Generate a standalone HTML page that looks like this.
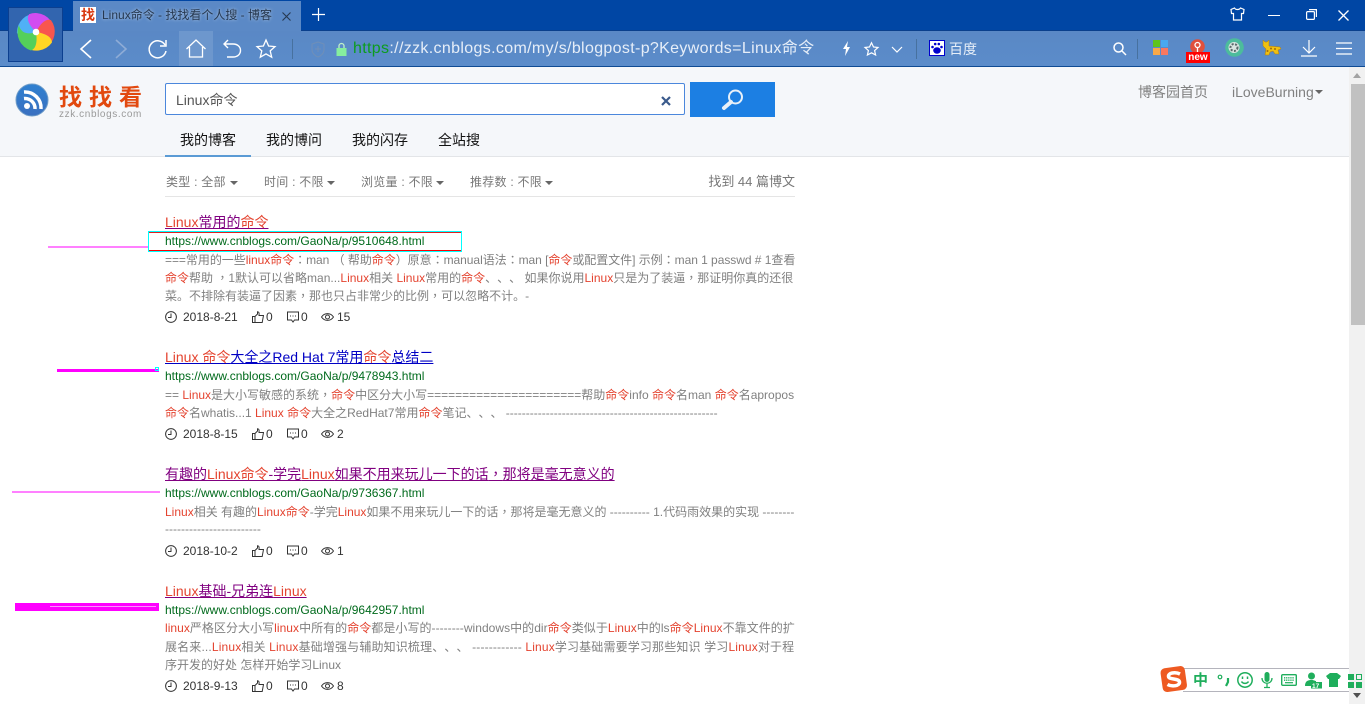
<!DOCTYPE html>
<html lang="zh-CN"><head><meta charset="utf-8"><title>Linux命令 - 找找看个人搜 - 博客园</title>
<style>
html,body{margin:0;padding:0;width:1365px;height:704px;overflow:hidden;background:#fff;font-family:"Liberation Sans","Noto Sans CJK SC",sans-serif;text-spacing-trim:space-all}
.a{position:absolute;white-space:nowrap}
svg{position:absolute;overflow:visible}
.t{left:165px;font-size:14px;line-height:20px;height:20px;text-decoration:underline}
.t i,.s i{font-style:normal;color:#e4432f}
.c{font-family:"Liberation Sans","Noto Sans CJK TC",sans-serif}
.p{color:#800080}.b{color:#0000c4}
.u{left:165px;font-size:12px;line-height:16px;color:#006a1c}
.s{left:165px;font-size:12px;line-height:18px;color:#808080}
.m{font-size:12px;line-height:16px;color:#333}
.f{font-size:12px;line-height:16px;color:#777;top:174px;letter-spacing:.25px}
.n{font-size:14px;line-height:20px;color:#111;top:130px}
.car{position:absolute;width:0;height:0;border:4px solid transparent;border-top:4px solid #666;border-bottom:0}
</style></head>
<body>
<svg width="0" height="0" style="position:absolute"><defs>
<symbol id="clock" viewBox="0 0 12 12"><circle cx="6" cy="6" r="5.4" fill="none" stroke="#333"/><path d="M6 2.500V6.500H3" fill="none" stroke="#333"/></symbol>
<symbol id="thumb" viewBox="0 0 12 12"><path d="M.5 5.500H3V11.500H.5ZM3 5.500 5.500 3V.7C7 .7 7.300 2 7 4.500H11.500L10.200 11.500H3" fill="none" stroke="#333"/></symbol>
<symbol id="cmt" viewBox="0 0 12 12"><path d="M.5 1H11.500V9H7.500L6 11 4.500 9H.5Z" fill="none" stroke="#333"/><path d="M3 5H4M5.500 5H6.500M8 5H9" stroke="#333"/></symbol>
<symbol id="eye" viewBox="0 0 13 10"><path d="M.5 5C3.500.5 9.500.5 12.500 5 9.500 9.500 3.500 9.500.5 5Z" fill="none" stroke="#333"/><circle cx="6.500" cy="5" r="2" fill="none" stroke="#333"/></symbol>
<path id="petal" d="M0 0C-6-6-9-12-6-16A17 17 0 0 1 16-4C10-9 4-6 0 0Z"/>
</defs></svg>

<!-- title bar -->
<div class="a" style="left:0;top:0;width:1365px;height:31px;background:#0046a4"></div>
<div class="a" style="left:0;top:30px;width:1365px;height:1px;background:#0a3f8c"></div>
<div class="a" style="left:0;top:31px;width:1365px;height:35px;background:linear-gradient(#5a88c5,#5b8cca)"></div>
<div class="a" style="left:0;top:66px;width:1365px;height:1px;background:#0f4b94"></div>
<div class="a" style="left:73px;top:1px;width:228px;height:30px;background:#5b89c6"></div>
<div class="a" style="left:80px;top:7px;width:16px;height:16px;background:#fff;color:#d8380f;font:bold 14px/16px 'Noto Sans CJK SC',sans-serif;text-align:center">找</div>
<div class="a" style="left:102px;top:7px;font-size:12px;line-height:17px;color:#26384f;text-shadow:0 0 3px #b9cde6">Linux命令 - 找找看个人搜 - 博客</div>
<svg style="left:282px;top:12px" width="9" height="9"><path d="M.5.500 8.500 8.500M8.500.500.5 8.500" stroke="#26384f" stroke-width="1.100"/></svg>
<svg style="left:312px;top:8px" width="13" height="13"><path d="M6.500 0V13M0 6.500H13" stroke="#fff" stroke-width="1.200"/></svg>
<!-- app logo -->
<div class="a" style="left:8px;top:7px;width:53px;height:53px;background:#3265af;border:1px solid #0c3f8f"></div>
<svg style="left:35.700px;top:32.300px" width="1" height="1"><g transform="scale(1.120)">
<use href="#petal" fill="#50b0f6" transform="rotate(288)"/>
<use href="#petal" fill="#d24cf0"/>
<use href="#petal" fill="#f8564e" transform="rotate(72)"/>
<use href="#petal" fill="#ffd624" transform="rotate(144)"/>
<use href="#petal" fill="#54d05a" transform="rotate(216)"/>
<path d="M0 0C-6-6-9-12-6-16L0-8Z" fill="#d24cf0"/>
</g><circle r="3.300" fill="#fff"/></svg>
<!-- nav icons -->
<svg style="left:78px;top:38px" width="16" height="22" fill="none" stroke="#fff" stroke-width="1.600"><path d="M13 2 3 11 13 20"/></svg>
<svg style="left:113px;top:38px" width="16" height="22" fill="none" stroke="#8eacd6" stroke-width="1.600"><path d="M3 2 13 11 3 20"/></svg>
<svg style="left:148px;top:39px" width="20" height="20" fill="none" stroke="#fff" stroke-width="1.500"><path d="M17 6A8.500 8.500 0 1 0 18 12"/><path d="M18 1V7H12"/></svg>
<div class="a" style="left:179px;top:31px;width:34px;height:35px;background:#6d97cd"></div>
<svg style="left:186px;top:39px" width="20" height="19" fill="none" stroke="#fff" stroke-width="1.300"><path d="M.5 10 10 1 19.500 10M3.500 8V18H16.500V8"/></svg>
<svg style="left:223px;top:39px" width="18" height="19" fill="none" stroke="#fff" stroke-width="1.400"><path d="M5 1 1 5 5 9M1 5H10C20 5 20 18 10 18H4"/></svg>
<svg style="left:256px;top:39px" width="20" height="19" fill="none" stroke="#fff" stroke-width="1.300"><path d="M10 1 12.600 7 19 7.600 14.200 11.900 15.700 18.200 10 14.900 4.300 18.200 5.800 11.900 1 7.600 7.400 7Z"/></svg>
<div class="a" style="left:292px;top:39px;width:1px;height:20px;background:#47719f"></div>
<svg style="left:311px;top:41px" width="14" height="17" fill="none" stroke="#6f8fb8"><path d="M7 1 13 3V9C13 12 10 15 7 16 4 15 1 12 1 9V3ZM7 5V11M4 8H10"/></svg>
<svg style="left:336px;top:42px" width="11" height="14"><path d="M3 6V4A2.500 2.500 0 0 1 8 4V6" fill="none" stroke="#bff0c8" stroke-width="1.300"/><rect x="0.500" y="6" width="10" height="8" fill="#86ee9e"/></svg>
<div class="a" style="left:353px;top:39px;font-size:16px;line-height:20px;color:#e6eef8;letter-spacing:.34px"><span style="color:#0c9c1e">https</span>://zzk.cnblogs.com/my/s/blogpost-p?Keywords=Linux命令</div>
<svg style="left:842px;top:41px" width="9" height="15"><path d="M6 0 1 8H4L3 15 8 6H5Z" fill="#fff"/></svg>
<svg style="left:864px;top:42px" width="15" height="14" fill="none" stroke="#fff" stroke-width="1.200"><path d="M7.500.800 9.500 5 14 5.500 10.600 8.600 11.600 13 7.500 10.800 3.400 13 4.400 8.600 1 5.500 5.500 5Z"/></svg>
<svg style="left:891px;top:46px" width="12" height="8" fill="none" stroke="#fff" stroke-width="1.200"><path d="M1 1 6 6 11 1"/></svg>
<div class="a" style="left:916px;top:39px;width:1px;height:20px;background:#47719f"></div>
<div class="a" style="left:929px;top:40px;width:14px;height:14px;background:#fff;border:1px solid #00c"></div>
<svg style="left:931px;top:42px" width="12" height="12" fill="#00c"><ellipse cx="6" cy="8.500" rx="3.800" ry="3.200"/><circle cx="1.500" cy="5" r="1.300"/><circle cx="4.200" cy="2" r="1.300"/><circle cx="7.800" cy="2" r="1.300"/><circle cx="10.500" cy="5" r="1.300"/></svg>
<div class="a" style="left:949px;top:39px;font-size:14px;line-height:20px;color:#e6eef8">百度</div>
<svg style="left:1113px;top:42px" width="14" height="14" fill="none" stroke="#fff" stroke-width="1.500"><circle cx="5.500" cy="5.500" r="4.500"/><path d="M9 9 13 13"/></svg>
<div class="a" style="left:1137px;top:39px;width:1px;height:20px;background:#47719f"></div>
<div class="a" style="left:1153px;top:40px;width:7px;height:7px;background:#5fc41c"></div>
<div class="a" style="left:1161px;top:40px;width:7px;height:7px;background:#48a8f0"></div>
<div class="a" style="left:1153px;top:48px;width:7px;height:7px;background:#f8a848"></div>
<div class="a" style="left:1161px;top:48px;width:7px;height:7px;background:#f87860"></div>
<svg style="left:1190px;top:39px" width="15" height="15"><circle cx="7.500" cy="7.500" r="7.300" fill="#e0503c"/><circle cx="7.500" cy="6" r="2.500" fill="none" stroke="#fff" stroke-width="1.300"/><path d="M7.500 8.500V13" stroke="#fff" stroke-width="1.300"/></svg>
<div class="a" style="left:1186px;top:52px;width:24px;height:11px;background:#f00;color:#fff;font:bold 10px/11px 'Liberation Sans',sans-serif;text-align:center">new</div>
<svg style="left:1225px;top:38px" width="19" height="19"><circle cx="9.500" cy="9.500" r="9.300" fill="#4cbc9c"/><circle cx="9" cy="9.500" r="5.500" fill="#d8e4e0"/><circle cx="9" cy="9.500" r="3.500" fill="none" stroke="#58686a" stroke-width="2" stroke-dasharray="2 1.500"/></svg>
<svg style="left:1262px;top:40px" width="19" height="15"><path d="M1 0 3 2H5L7 0V6L18 7 19 9 16 10 17 14H13L11 11 8 12 7 15H3L4 9 1 6Z" fill="#f0c010" stroke="#b07a10" stroke-width=".5"/><circle cx="9" cy="8.500" r="1" fill="#a06a10"/><circle cx="13" cy="9" r="1" fill="#a06a10"/><circle cx="5.500" cy="11" r="1" fill="#a06a10"/></svg>
<svg style="left:1301px;top:40px" width="16" height="17" fill="none" stroke="#fff" stroke-width="1.200"><path d="M8 0V12M2 7 8 13 14 7M0 16H16"/></svg>
<svg style="left:1336px;top:42px" width="16" height="13" stroke="#fff" stroke-width="1.200"><path d="M0 1H16M0 6.500H16M0 12H16"/></svg>

<!-- page header -->
<div class="a" style="left:0;top:67px;width:1349px;height:89px;background:#f5f7fa"></div>
<div class="a" style="left:0;top:156px;width:1349px;height:1px;background:#e3e5e8"></div>
<svg style="left:15px;top:83px" width="34" height="34"><defs><linearGradient id="rg" x1="0" y1="0" x2="0" y2="1"><stop offset="0" stop-color="#2f80d0"/><stop offset="1" stop-color="#3a70c0"/></linearGradient></defs><circle cx="17" cy="17" r="16" fill="url(#rg)" stroke="#6e9cc8"/><circle cx="12" cy="23" r="3" fill="#fff"/><path d="M9 15.500A10 10 0 0 1 20 26M9 9A16 16 0 0 1 26 26" fill="none" stroke="#fff" stroke-width="3.500"/></svg>
<div class="a" style="left:59px;top:80px;font:bold 23px/30px 'Noto Sans CJK SC',sans-serif;letter-spacing:7px;color:#e2490f">找找看</div>
<div class="a" style="left:59px;top:108px;font-size:10px;line-height:14px;color:#9a9a9a;letter-spacing:.6px">zzk.cnblogs.com</div>
<div class="a" style="left:165px;top:83px;width:518px;height:30px;background:#fff;border:1.500px solid #4b87dc;border-radius:2px"></div>
<div class="a" style="left:176px;top:91px;font-size:14px;line-height:18px;color:#555">Linux命令</div>
<svg style="left:661px;top:96px" width="10" height="10"><path d="M1 1 9 9M9 1 1 9" stroke="#3a5a8c" stroke-width="2.200"/></svg>
<div class="a" style="left:690px;top:82px;width:85px;height:35px;background:#1c7fe3"></div>
<svg style="left:721px;top:88px" width="24" height="24" fill="none"><circle cx="14.500" cy="9" r="6.500" stroke="#e8f0f8" stroke-width="2"/><path d="M10 14 3 20" stroke="#e8f0f8" stroke-width="4" stroke-linecap="round"/></svg>
<div class="a n" style="left:180px">我的博客</div>
<div class="a n" style="left:266px">我的博问</div>
<div class="a n" style="left:352px">我的闪存</div>
<div class="a n" style="left:438px">全站搜</div>
<div class="a" style="left:165px;top:155px;width:86px;height:2px;background:#5b9bd5"></div>
<div class="a" style="left:1138px;top:82px;font-size:14px;line-height:20px;color:#808080">博客园首页</div>
<div class="a" style="left:1232px;top:82px;font-size:14px;line-height:20px;color:#808080">iLoveBurning</div>
<div class="car" style="left:1315px;top:90px"></div>

<!-- filters -->
<div class="a f" style="left:166px">类型 : 全部</div><div class="car" style="left:230px;top:181px"></div>
<div class="a f" style="left:264px">时间 : 不限</div><div class="car" style="left:327px;top:181px"></div>
<div class="a f" style="left:361px">浏览量 : 不限</div><div class="car" style="left:436px;top:181px"></div>
<div class="a f" style="left:470px">推荐数 : 不限</div><div class="car" style="left:545px;top:181px"></div>
<div class="a f" style="right:570px;font-size:13px;letter-spacing:0">找到 44 篇博文</div>
<div class="a" style="left:165px;top:196px;width:630px;height:1px;background:#e5e5e5"></div>

<!-- result 1 -->
<div class="a t p" style="top:212px"><i>Linux</i>常用的<i>命令</i></div>
<div class="a u" style="top:233px">https://www.cnblogs.com/GaoNa/p/9510648.html</div>
<div class="a s" style="top:251px;letter-spacing:-.04px">===常用的一些<i>linux命令</i><span class="c" lang="zh-TW">：</span>man （ 帮助<i>命令</i>）原意<span class="c" lang="zh-TW">：</span>manual语法<span class="c" lang="zh-TW">：</span>man [<i>命令</i>或配置文件] 示例<span class="c" lang="zh-TW">：</span>man 1 passwd # 1查看</div>
<div class="a s" style="top:269px"><i>命令</i>帮助 <span class="c" lang="zh-TW">，</span>1默认可以省略man...<i>Linux</i>相关 <i>Linux</i>常用的<i>命令</i>、、、 如果你说用<i>Linux</i>只是为了装逼<span class="c" lang="zh-TW">，</span>那证明你真的还很</div>
<div class="a s" style="top:287px">菜。不排除有装逼了因素<span class="c" lang="zh-TW">，</span>那也只占非常少的比例<span class="c" lang="zh-TW">，</span>可以忽略不计。-</div>
<svg style="left:165px;top:311px" width="12" height="12"><use href="#clock"/></svg><div class="a m" style="left:183px;top:309px">2018-8-21</div>
<svg style="left:252px;top:311px" width="12" height="12"><use href="#thumb"/></svg><div class="a m" style="left:266px;top:309px">0</div>
<svg style="left:287px;top:311px" width="12" height="12"><use href="#cmt"/></svg><div class="a m" style="left:301px;top:309px">0</div>
<svg style="left:321px;top:312px" width="13" height="10"><use href="#eye"/></svg><div class="a m" style="left:337px;top:309px">15</div>

<!-- result 2 -->
<div class="a t b" style="top:347px"><i>Linux 命令</i>大全之Red Hat 7常用<i>命令</i>总结二</div>
<div class="a u" style="top:368px">https://www.cnblogs.com/GaoNa/p/9478943.html</div>
<div class="a s" style="top:386px">== <i>Linux</i>是大小写敏感的系统<span class="c" lang="zh-TW">，</span><i>命令</i>中区分大小写======================帮助<i>命令</i>info <i>命令</i>名man <i>命令</i>名apropos</div>
<div class="a s" style="top:404px"><i>命令</i>名whatis...1 <i>Linux 命令</i>大全之RedHat7常用<i>命令</i>笔记、、、 -----------------------------------------------------</div>
<svg style="left:165px;top:428px" width="12" height="12"><use href="#clock"/></svg><div class="a m" style="left:183px;top:426px">2018-8-15</div>
<svg style="left:252px;top:428px" width="12" height="12"><use href="#thumb"/></svg><div class="a m" style="left:266px;top:426px">0</div>
<svg style="left:287px;top:428px" width="12" height="12"><use href="#cmt"/></svg><div class="a m" style="left:301px;top:426px">0</div>
<svg style="left:321px;top:429px" width="13" height="10"><use href="#eye"/></svg><div class="a m" style="left:337px;top:426px">2</div>

<!-- result 3 -->
<div class="a t p" style="top:464px">有趣的<i>Linux命令</i>-学完<i>Linux</i>如果不用来玩儿一下的话<span class="c" lang="zh-TW">，</span>那将是毫无意义的</div>
<div class="a u" style="top:485px">https://www.cnblogs.com/GaoNa/p/9736367.html</div>
<div class="a s" style="top:503px"><i>Linux</i>相关 有趣的<i>Linux命令</i>-学完<i>Linux</i>如果不用来玩儿一下的话<span class="c" lang="zh-TW">，</span>那将是毫无意义的 ---------- 1.代码雨效果的实现 --------</div>
<div class="a s" style="top:520px">------------------------</div>
<svg style="left:165px;top:545px" width="12" height="12"><use href="#clock"/></svg><div class="a m" style="left:183px;top:543px">2018-10-2</div>
<svg style="left:252px;top:545px" width="12" height="12"><use href="#thumb"/></svg><div class="a m" style="left:266px;top:543px">0</div>
<svg style="left:287px;top:545px" width="12" height="12"><use href="#cmt"/></svg><div class="a m" style="left:301px;top:543px">0</div>
<svg style="left:321px;top:546px" width="13" height="10"><use href="#eye"/></svg><div class="a m" style="left:337px;top:543px">1</div>

<!-- result 4 -->
<div class="a t p" style="top:581px"><i>Linux</i>基础-兄弟连<i>Linux</i></div>
<div class="a u" style="top:602px">https://www.cnblogs.com/GaoNa/p/9642957.html</div>
<div class="a s" style="top:619px;letter-spacing:.04px"><i>linux</i>严格区分大小写<i>linux</i>中所有的<i>命令</i>都是小写的--------windows中的dir<i>命令</i>类似于<i>Linux</i>中的ls<i>命令</i><i>Linux</i>不靠文件的扩</div>
<div class="a s" style="top:638px;letter-spacing:.15px">展名来...<i>Linux</i>相关 <i>Linux</i>基础增强与辅助知识梳理、、、 ------------ <i>Linux</i>学习基础需要学习那些知识 学习<i>Linux</i>对于程</div>
<div class="a s" style="top:656px">序开发的好处 怎样开始学习Linux</div>
<svg style="left:165px;top:680px" width="12" height="12"><use href="#clock"/></svg><div class="a m" style="left:183px;top:678px">2018-9-13</div>
<svg style="left:252px;top:680px" width="12" height="12"><use href="#thumb"/></svg><div class="a m" style="left:266px;top:678px">0</div>
<svg style="left:287px;top:680px" width="12" height="12"><use href="#cmt"/></svg><div class="a m" style="left:301px;top:678px">0</div>
<svg style="left:321px;top:681px" width="13" height="10"><use href="#eye"/></svg><div class="a m" style="left:337px;top:678px">8</div>

<!-- hand-drawn annotations -->
<div class="a" style="left:48px;top:246px;width:100px;height:2px;background:#ff80ff"></div>
<div class="a" style="left:148px;top:231px;width:312px;height:19px;border:1px solid #0ff"></div>
<div class="a" style="left:149px;top:232px;width:312px;height:17px;border-top:1px solid #e02020;border-bottom:1px solid #f00"></div>
<div class="a" style="left:57px;top:369px;width:102px;height:3px;background:#f0f"></div>
<div class="a" style="left:155px;top:367px;width:2px;height:2px;border:1px solid #0ff"></div>
<div class="a" style="left:12px;top:491px;width:148px;height:2px;background:#ff80ff"></div>
<div class="a" style="left:15px;top:603px;width:144px;height:8px;background:#f0f"></div>
<div class="a" style="left:50px;top:606px;width:106px;height:1px;background:#ff90ff"></div>

<!-- scrollbar -->
<div class="a" style="left:1349px;top:67px;width:16px;height:637px;background:#f1f1f1"></div>
<div class="a" style="left:1351px;top:84px;width:14px;height:241px;background:#c1c1c1"></div>
<div class="a" style="left:1353px;top:73px;width:0;height:0;border:4px solid transparent;border-bottom:5px solid #a3a3a3;border-top:0"></div>
<div class="a" style="left:1353px;top:693px;width:0;height:0;border:4px solid transparent;border-top:5px solid #505050;border-bottom:0"></div>

<!-- IME bar -->
<div class="a" style="left:1183px;top:668px;width:166px;height:1px;background:#b4b4bc"></div>
<div class="a" style="left:1183px;top:691px;width:166px;height:1px;background:#b4b4bc"></div>
<svg style="left:1160px;top:665px" width="28" height="28"><rect x="1.500" y="2" width="24.500" height="24" rx="4.500" fill="#ee5a22" transform="rotate(-8 14 14)"/><path d="M20 9C15 6.500 8 8 8.500 11.500 9 15 19 13 19.500 17 20 21 12 22 7.500 19.500" fill="none" stroke="#fff" stroke-width="3.500"/></svg>
<div class="a" style="left:1193px;top:671px;font:bold 15px/18px 'Noto Sans CJK SC',sans-serif;color:#1fae5c">中</div>
<svg style="left:1217px;top:674px" width="14" height="13"><circle cx="3" cy="3" r="1.800" fill="none" stroke="#1fae5c" stroke-width="1.200"/><path d="M11 4 V8 L9 12" fill="none" stroke="#1fae5c" stroke-width="2.200"/></svg>
<svg style="left:1237px;top:672px" width="16" height="16" fill="none" stroke="#1fae5c" stroke-width="1.500"><circle cx="8" cy="8" r="7.200"/><path d="M4.500 9.500C6 12 10 12 11.500 9.500"/><path d="M5.500 4.500V7M10.500 4.500V7"/></svg>
<svg style="left:1261px;top:672px" width="12" height="16"><rect x="3.500" y="0" width="5" height="10" rx="2.500" fill="#1fae5c"/><path d="M1 6C1 13 11 13 11 6M6 11V15M3 15.500H9" fill="none" stroke="#1fae5c" stroke-width="1.300"/></svg>
<svg style="left:1281px;top:674px" width="16" height="12"><rect x=".7" y=".7" width="14.600" height="10.600" rx="1" fill="none" stroke="#1fae5c" stroke-width="1.400"/><path d="M3 3.800H13M3 6.200H13" stroke="#1fae5c" stroke-width="1.300" stroke-dasharray="1.300 .8"/><path d="M4 8.700H12" stroke="#1fae5c" stroke-width="1.200"/></svg>
<svg style="left:1305px;top:672px" width="17" height="17"><circle cx="6.500" cy="4" r="3.500" fill="#1fae5c"/><path d="M0 14C0 9 3 8 6.500 8 9 8 10 9 11 9V14Z" fill="#1fae5c"/><rect x="6" y="10" width="11" height="6.500" fill="#1fae5c"/><text x="7" y="16" font-size="6.500" font-weight="bold" fill="#fff" font-family="Liberation Sans">17</text></svg>
<svg style="left:1326px;top:673px" width="15" height="14"><path d="M4 0H11L15 3 13 6H12V14H3V6H2L0 3Z" fill="#1fae5c"/></svg>
<svg style="left:1348px;top:674px" width="14" height="14"><path d="M0 0H6V6H0ZM0 8H6V14H0ZM8 8H14V14H8Z" fill="#1fae5c"/><rect x="8.500" y=".5" width="5" height="5" fill="none" stroke="#1fae5c"/></svg>
<!-- window controls -->
<svg style="left:1230px;top:7px" width="15" height="14" fill="none" stroke="#fff" stroke-width="1.200"><path d="M4.500 1C5.500 3 9.500 3 10.500 1L14 2.500 13.500 6.500H11.500V13H3.500V6.500H1.500L1 2.500Z"/></svg>
<div class="a" style="left:1268px;top:15px;width:12px;height:1px;background:#fff"></div>
<svg style="left:1306px;top:9px" width="11" height="11" fill="none" stroke="#fff" stroke-width="1.200"><rect x=".6" y="2.600" width="7.800" height="7.800" rx="1"/><path d="M3 .6H10.400V8"/></svg>
<svg style="left:1338px;top:10px" width="11" height="11" stroke="#fff" stroke-width="1.300"><path d="M.5.500 10.500 10.500M10.500.500.5 10.500"/></svg>
</body></html>
